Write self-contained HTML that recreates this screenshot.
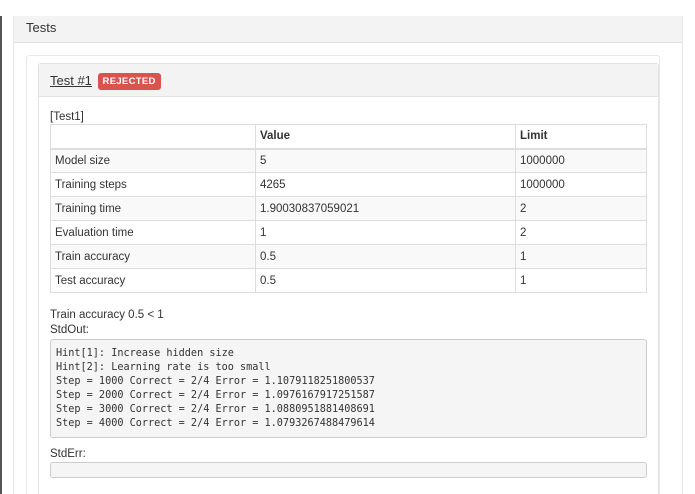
<!DOCTYPE html>
<html><head><style>
*{box-sizing:border-box;margin:0;padding:0}
html,body{width:695px;height:494px;overflow:hidden}
body{background:#fff;font-family:"Liberation Sans",sans-serif;font-size:11.5px;color:#333}
.wrap{position:relative;width:695px;height:494px;overflow:hidden}
.lb{position:absolute;left:0;top:16px;width:2px;height:478px;background:#555}
.outer{position:absolute;left:13px;top:16px;width:670px;height:490px;border:1px solid #e6e6e6;border-top:none;border-bottom:none}
.oh{height:27px;background:#f3f3f3;border-bottom:1px solid #e0e0e0;padding:4px 12px;font-size:13px;color:#333}
.mid{position:absolute;left:12px;top:39px;width:634px;height:450px;border:1px solid #e8e8e8;border-bottom:none;border-radius:3px}
.card{position:absolute;left:11px;top:7px;width:621px;height:440px;border:1px solid #e3e3e3;border-bottom:none;border-radius:3px}
.ch{height:33px;background:#f3f3f3;border-bottom:1px solid #e3e3e3;padding:9px 11px;font-size:13px}
.ch u{color:#333}
.badge{display:inline-block;background:#d9534f;color:#fff;font-weight:bold;font-size:9.5px;padding:3px 5px;border-radius:3px;letter-spacing:.3px;vertical-align:1px;margin-left:2px}
.body{padding:13px 11px}
table{border-collapse:collapse;width:597px;margin-top:0}
td,th{border:1px solid #ddd;height:24px;padding:0 4px;text-align:left;font-size:11.5px}
th{font-weight:bold;border-bottom:2px solid #ddd}
tr.g td{background:#f9f9f9}
pre{font-family:"DejaVu Sans Mono",monospace;font-size:10.2px;line-height:14px;background:#f5f5f5;border:1px solid #ccc;border-radius:3px;padding:7px 5px;width:597px;height:99px;margin-top:1px}
</style></head><body><div class="wrap">
<div class="lb"></div>
<div class="outer"><div class="oh">Tests</div>
<div class="mid"><div class="card">
<div class="ch"><u>Test #1</u> <span class="badge">REJECTED</span></div>
<div class="body">
<div style="line-height:14px">[Test1]</div>
<table>
<tr><th style="width:205px"></th><th style="width:260px">Value</th><th>Limit</th></tr>
<tr class="g"><td>Model size</td><td>5</td><td>1000000</td></tr>
<tr><td>Training steps</td><td>4265</td><td>1000000</td></tr>
<tr class="g"><td>Training time</td><td>1.90030837059021</td><td>2</td></tr>
<tr><td>Evaluation time</td><td>1</td><td>2</td></tr>
<tr class="g"><td>Train accuracy</td><td>0.5</td><td>1</td></tr>
<tr><td>Test accuracy</td><td>0.5</td><td>1</td></tr>
</table>
<div style="margin-top:15px;line-height:15px">Train accuracy 0.5 &lt; 1<br>StdOut:</div>
<pre>Hint[1]: Increase hidden size
Hint[2]: Learning rate is too small
Step = 1000 Correct = 2/4 Error = 1.1079118251800537
Step = 2000 Correct = 2/4 Error = 1.0976167917251587
Step = 3000 Correct = 2/4 Error = 1.0880951881408691
Step = 4000 Correct = 2/4 Error = 1.0793267488479614</pre>
<div style="margin-top:9px;line-height:14px">StdErr:</div>
<div style="margin-top:1px;width:597px;height:16px;background:#f5f5f5;border:1px solid #ccc;border-radius:3px"></div>
</div></div></div></div>
</div></body></html>
